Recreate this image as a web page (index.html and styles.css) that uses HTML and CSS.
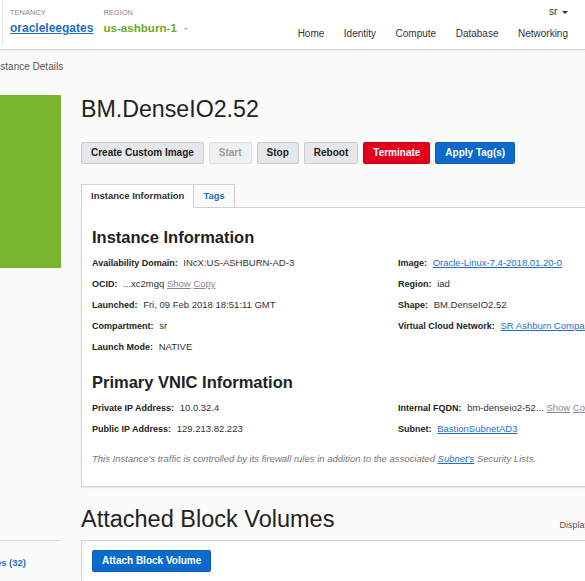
FILE: index.html
```html
<!DOCTYPE html>
<html lang="en">
<head>
    <meta charset="UTF-8">
    <meta name="viewport" content="width=device-width, initial-scale=1.0">
    <title>Instance Details</title>
    <link rel="stylesheet" href="styles.css">
</head>
<body>

    <header class="topbar flex">
        <div class="tenancy flex">
            <div class="flex flex-col">
                <span class="caption">TENANCY</span>
                <a href="#" class="tenancy-name">oracleleegates</a>
            </div>
            <div class="flex flex-col">
                <span class="caption">REGION</span>
                <span class="region">us-ashburn-1 <span class="region-caret"></span></span>
            </div>
        </div>
        <div class="topbar-right flex flex-col">
            <span class="user">sr <span class="caret"></span></span>
            <nav class="nav flex">
                <a href="#">Home</a>
                <a href="#">Identity</a>
                <a href="#">Compute</a>
                <a href="#">Database</a>
                <a href="#">Networking</a>
            </nav>
        </div>
    </header>

    <div class="breadcrumb">Instance Details</div>

    <main class="flex">
        <aside class="sidebar">
            <div class="status-box"></div>
            <div class="resources flex">
                <a href="#">Attached Block Volumes (32)</a>
            </div>
        </aside>

        <section class="content">
            <h1 class="title">BM.DenseIO2.52</h1>

            <div class="actions flex">
                <button class="btn btn-default">Create Custom Image</button>
                <button class="btn btn-disabled">Start</button>
                <button class="btn btn-default">Stop</button>
                <button class="btn btn-default">Reboot</button>
                <button class="btn btn-danger">Terminate</button>
                <button class="btn btn-primary">Apply Tag(s)</button>
            </div>

            <div class="tabs flex">
                <span class="tab active">Instance Information</span>
                <span class="tab">Tags</span>
            </div>

            <div class="panel">
                <h2 class="section-title">Instance Information</h2>
                <div class="fields flex">
                    <div class="col">
                        <div class="field"><span class="label">Availability Domain:</span> INcX:US-ASHBURN-AD-3</div>
                        <div class="field"><span class="label">OCID:</span> ...xc2mgq <a href="#" class="muted">Show</a> <a href="#" class="muted">Copy</a></div>
                        <div class="field"><span class="label">Launched:</span> Fri, 09 Feb 2018 18:51:11 GMT</div>
                        <div class="field"><span class="label">Compartment:</span> sr</div>
                        <div class="field"><span class="label">Launch Mode:</span> NATIVE</div>
                    </div>
                    <div class="col">
                        <div class="field"><span class="label">Image:</span> <a href="#">Oracle-Linux-7.4-2018.01.20-0</a></div>
                        <div class="field"><span class="label">Region:</span> iad</div>
                        <div class="field"><span class="label">Shape:</span> BM.DenseIO2.52</div>
                        <div class="field"><span class="label">Virtual Cloud Network:</span> <a href="#">SR Ashburn Compartment VCN</a></div>
                    </div>
                </div>

                <h2 class="section-title second">Primary VNIC Information</h2>
                <div class="fields flex">
                    <div class="col">
                        <div class="field"><span class="label">Private IP Address:</span> 10.0.32.4</div>
                        <div class="field"><span class="label">Public IP Address:</span> 129.213.82.223</div>
                    </div>
                    <div class="col">
                        <div class="field"><span class="label">Internal FQDN:</span> bm-denseio2-52... <a href="#" class="muted">Show</a> <a href="#" class="muted">Copy</a></div>
                        <div class="field"><span class="label">Subnet:</span> <a href="#">BastionSubnetAD3</a></div>
                    </div>
                </div>

                <p class="note">This Instance's traffic is controlled by its firewall rules in addition to the associated <a href="#">Subnet's</a> Security Lists.</p>
            </div>

            <div class="list-header flex">
                <h2 class="list-title">Attached Block Volumes</h2>
                <span class="count">Displaying 1 Volume</span>
            </div>
            <div class="list-panel">
                <button class="btn btn-primary">Attach Block Volume</button>
            </div>
        </section>
    </main>

</body>
</html>
```

FILE: styles.css
```css
* {
    margin: 0;
    padding: 0;
    box-sizing: border-box;
}

body {
    font-family: "Liberation Sans", Arial, sans-serif;
    font-size: 9.5px;
    color: #333;
    background-color: #fbfbfb;
    overflow: hidden;
}

a {
    color: #1f6fc5;
}

button {
    font-family: inherit;
}

.flex {
    display: flex;
}

.flex-col {
    flex-direction: column;
}

/* top bar */

.topbar {
    height: 50px;
    justify-content: space-between;
    background-color: #fff;
    border-bottom: 1px solid #d4d4d4;
    box-shadow: 0 1px 2px rgba(0, 0, 0, 0.08);
}

.tenancy {
    height: 44px;
    margin-left: 2px;
    padding: 8px 0 0 7px;
    gap: 10px;
    border-left: 1px solid #e2e2e2;
}

.caption {
    font-size: 7.5px;
    line-height: 10px;
    color: #888;
}

.tenancy-name {
    margin-top: 2px;
    font-size: 12px;
    font-weight: bold;
    line-height: 16px;
}

.region {
    margin-top: 2px;
    font-size: 11.6px;
    font-weight: bold;
    line-height: 16px;
    color: #6bab2a;
}

.region-caret {
    display: inline-block;
    margin-left: 4px;
    vertical-align: middle;
    border-left: 2px solid transparent;
    border-right: 2px solid transparent;
    border-top: 2px solid #aaa;
}

.topbar-right {
    align-items: flex-end;
    padding-right: 17px;
}

.user {
    padding-top: 5px;
    font-size: 10px;
    line-height: 14px;
    color: #333;
}

.caret {
    display: inline-block;
    margin-left: 2px;
    vertical-align: middle;
    border-left: 3px solid transparent;
    border-right: 3px solid transparent;
    border-top: 3px solid #333;
}

.nav {
    margin-top: 8px;
    gap: 19.5px;
}

.nav a {
    font-size: 10px;
    line-height: 14px;
    color: #333;
    text-decoration: none;
}

.breadcrumb {
    padding-top: 10px;
    font-size: 10px;
    line-height: 14px;
    color: #555;
    text-indent: -8px;
}

/* layout */

main {
    margin-top: 21px;
}

.sidebar {
    width: 61px;
    flex-shrink: 0;
}

.status-box {
    height: 173px;
    background-color: #79b52f;
}

.resources {
    margin-top: 272px;
    padding: 15px 35px 0 0;
    justify-content: flex-end;
    overflow: hidden;
    border-top: 1px solid #dcdcdc;
}

.resources a {
    font-weight: bold;
    line-height: 14px;
    white-space: nowrap;
    text-decoration: none;
}

.content {
    width: 570px;
    margin-left: 20px;
    flex-shrink: 0;
}

.title {
    font-size: 23.2px;
    font-weight: normal;
    line-height: 28px;
    color: #222;
}

/* buttons */

.actions {
    margin-top: 19px;
    gap: 5px;
}

.btn {
    height: 22px;
    padding: 0 9px;
    border: 1px solid;
    border-radius: 2px;
    font-size: 10px;
    font-weight: bold;
    line-height: 20px;
    white-space: nowrap;
}

.btn-default {
    background-color: #e5e7e9;
    border-color: #c9cdd1;
    color: #222;
}

.btn-disabled {
    background-color: #eef0f1;
    border-color: #dde0e2;
    color: #9c9c9c;
}

.btn-danger {
    background-color: #e1001c;
    border-color: #c90019;
    color: #fff;
}

.btn-primary {
    background-color: #0c6bca;
    border-color: #0a5fb4;
    color: #fff;
}

/* tabs */

.tabs {
    margin-top: 20px;
    margin-bottom: -1px;
}

.tab {
    position: relative;
    padding: 0 9px;
    font-weight: bold;
    line-height: 22px;
    color: #1f6fc5;
    background-color: #fafafa;
    border: 1px solid #d0d0d0;
}

.tab.active {
    color: #333;
    background-color: #fff;
    border-bottom-color: #fff;
}

.tab + .tab {
    border-left: none;
}

/* details panel */

.panel {
    padding: 19px 10px 17px;
    background-color: #fff;
    border: 1px solid #d4d4d4;
    box-shadow: 0 1px 1px rgba(0, 0, 0, 0.08);
}

.section-title {
    font-size: 16.5px;
    line-height: 20px;
    color: #222;
}

.section-title.second {
    margin-top: 15px;
}

.fields {
    margin-top: 5px;
}

.col {
    width: 306px;
    flex-shrink: 0;
}

.field {
    height: 21px;
    line-height: 21px;
    white-space: nowrap;
}

.label {
    font-size: 9px;
    font-weight: bold;
    line-height: 1;
    margin-right: 3px;
    color: #222;
}

.muted {
    color: #8a8a8a;
}

.note {
    margin-top: 10px;
    line-height: 20px;
    font-style: italic;
    color: #777;
    white-space: nowrap;
}

/* block volumes */

.list-header {
    margin-top: 18px;
    padding-bottom: 7px;
    justify-content: space-between;
    align-items: flex-end;
    border-bottom: 1px solid #d4d4d4;
}

.list-title {
    font-size: 23.5px;
    font-weight: normal;
    line-height: 28px;
    color: #222;
}

.count {
    margin: 0 10px 2px 0;
    font-size: 9px;
    line-height: 12px;
    color: #555;
}

.list-panel {
    padding: 9px 10px;
    background-color: #fff;
    border-left: 1px solid #d4d4d4;
    height: 60px;
}
```
